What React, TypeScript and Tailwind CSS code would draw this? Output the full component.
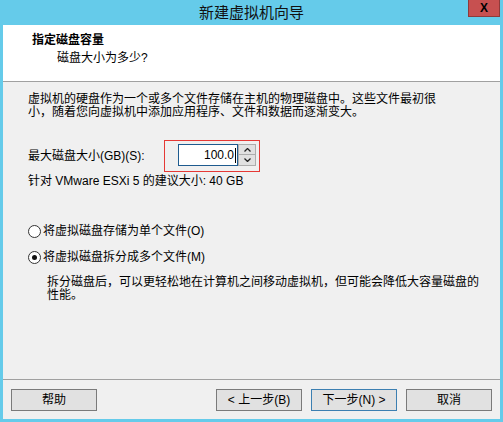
const FONT = "[font-family:'Liberation_Sans','Noto_Sans_CJK_SC',sans-serif]";

const Chevron = ({ up }: { up?: boolean }) => (
  <svg width="7" height="4" viewBox="0 0 7 4" className="block">
    <path
      d={up ? "M0.5 3.5 L3.5 0.5 L6.5 3.5" : "M0.5 0.5 L3.5 3.5 L6.5 0.5"}
      fill="none"
      stroke="#222"
      strokeWidth="1.3"
    />
  </svg>
);

const Radio = ({ checked, label }: { checked?: boolean; label: string }) => (
  <div className="flex items-center h-[13px]">
    <span className="w-[13px] h-[13px] rounded-full border border-[#333] bg-white flex items-center justify-center shrink-0">
      {checked && <span className="w-[5px] h-[5px] rounded-full bg-[#111]" />}
    </span>
    <span className="ml-[2px] leading-[13px]">{label}</span>
  </div>
);

const WizardButton = ({ label, primary }: { label: string; primary?: boolean }) => (
  <button
    className={`w-[86px] h-[22px] bg-[#e1e1e1] border text-[12px] leading-none flex items-center justify-center ${
      primary ? "border-[#3c7fb1]" : "border-[#7a7a7a]"
    }`}
  >
    {label}
  </button>
);

export default function App() {
  return (
    <div className={`w-[503px] h-[422px] flex flex-col bg-[#65cbea] text-[12px] text-black ${FONT}`}>
      {/* title bar */}
      <div className="h-[25px] shrink-0 relative flex items-center justify-center">
        <span className="text-[15px] leading-none text-[#111]">新建虚拟机向导</span>
        <div className="absolute right-[3px] top-0 w-[32px] h-[17px] bg-[#c75050] border border-t-0 border-[#8e3a3a] flex items-center justify-center">
          <span className="text-[12px] font-bold leading-none">X</span>
        </div>
      </div>

      <div className="flex-1 mx-[3px] mb-[3px] bg-[#f0f0f0] flex flex-col">
        {/* header */}
        <div className="h-[57px] shrink-0 bg-white border-b border-[#a0a0a0] pl-[29px] pt-[9px]">
          <div className="font-bold leading-[13px]">指定磁盘容量</div>
          <div className="pl-[25px] mt-[5px] leading-[13px]">磁盘大小为多少?</div>
        </div>

        {/* body */}
        <div className="flex-1 pl-[25px] pt-[11px]">
          <p className="leading-[13px]">
            虚拟机的硬盘作为一个或多个文件存储在主机的物理磁盘中。这些文件最初很
            <br />
            小，随着您向虚拟机中添加应用程序、文件和数据而逐渐变大。
          </p>

          <div className="flex items-center mt-[21px]">
            <span className="w-[136px] leading-[13px]">最大磁盘大小(GB)(S):</span>
            <div className="border border-[#e53935] pl-[13px] pr-[3px] pt-[3px] pb-[5px] flex">
              <div className="w-[60px] h-[22px] bg-white border border-[#1e5b8f] flex items-center justify-end pr-[1px]">
                <span className="leading-none">100.0</span>
                <span className="w-px h-[15px] bg-black ml-[1px]" />
              </div>
              <div className="w-[18px] h-[22px] flex flex-col">
                <div className="h-[11px] bg-[#e1e1e1] border border-[#adadad] flex items-center justify-center">
                  <Chevron up />
                </div>
                <div className="h-[11px] bg-[#e1e1e1] border border-t-0 border-[#adadad] flex items-center justify-center">
                  <Chevron />
                </div>
              </div>
            </div>
          </div>

          <div className="mt-[3px] leading-[13px]">针对 VMware ESXi 5 的建议大小: 40 GB</div>

          <div className="mt-[37px]">
            <Radio label="将虚拟磁盘存储为单个文件(O)" />
          </div>
          <div className="mt-[13px]">
            <Radio checked label="将虚拟磁盘拆分成多个文件(M)" />
          </div>
          <p className="mt-[12px] pl-[19px] leading-[13px]">
            拆分磁盘后，可以更轻松地在计算机之间移动虚拟机，但可能会降低大容量磁盘的
            <br />
            性能。
          </p>
        </div>

        {/* footer */}
        <div className="shrink-0 border-t border-[#a0a0a0] pt-[9px] pb-[8px] px-[8px] flex justify-between">
          <WizardButton label="帮助" />
          <div className="flex gap-[9px]">
            <WizardButton label="< 上一步(B)" />
            <WizardButton primary label="下一步(N) >" />
            <WizardButton label="取消" />
          </div>
        </div>
      </div>
    </div>
  );
}
